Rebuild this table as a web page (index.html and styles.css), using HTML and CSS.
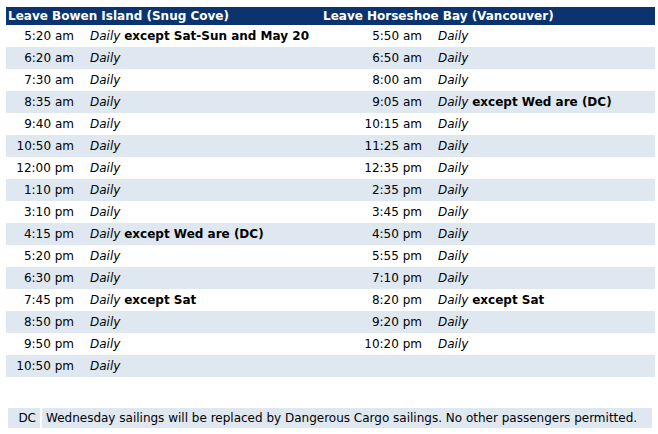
FILE: index.html
```html
<!DOCTYPE html>
<html>
<head>
<meta charset="utf-8">
<link rel="stylesheet" href="styles.css">
</head>
<body>
<table class="sched">
<colgroup><col class="c1"><col class="c2"><col class="c3"><col class="c4"></colgroup>
<thead>
<tr><th colspan="2">Leave Bowen Island (Snug Cove)</th><th colspan="2">Leave Horseshoe Bay (Vancouver)</th></tr>
</thead>
<tbody>
<tr><td class="t">5:20 am</td><td><i>Daily</i> <b>except Sat-Sun and May 20</b></td><td class="t">5:50 am</td><td><i>Daily</i></td></tr>
<tr><td class="t">6:20 am</td><td><i>Daily</i></td><td class="t">6:50 am</td><td><i>Daily</i></td></tr>
<tr><td class="t">7:30 am</td><td><i>Daily</i></td><td class="t">8:00 am</td><td><i>Daily</i></td></tr>
<tr><td class="t">8:35 am</td><td><i>Daily</i></td><td class="t">9:05 am</td><td><i>Daily</i> <b>except Wed are (DC)</b></td></tr>
<tr><td class="t">9:40 am</td><td><i>Daily</i></td><td class="t">10:15 am</td><td><i>Daily</i></td></tr>
<tr><td class="t">10:50 am</td><td><i>Daily</i></td><td class="t">11:25 am</td><td><i>Daily</i></td></tr>
<tr><td class="t">12:00 pm</td><td><i>Daily</i></td><td class="t">12:35 pm</td><td><i>Daily</i></td></tr>
<tr><td class="t">1:10 pm</td><td><i>Daily</i></td><td class="t">2:35 pm</td><td><i>Daily</i></td></tr>
<tr><td class="t">3:10 pm</td><td><i>Daily</i></td><td class="t">3:45 pm</td><td><i>Daily</i></td></tr>
<tr><td class="t">4:15 pm</td><td><i>Daily</i> <b>except Wed are (DC)</b></td><td class="t">4:50 pm</td><td><i>Daily</i></td></tr>
<tr><td class="t">5:20 pm</td><td><i>Daily</i></td><td class="t">5:55 pm</td><td><i>Daily</i></td></tr>
<tr><td class="t">6:30 pm</td><td><i>Daily</i></td><td class="t">7:10 pm</td><td><i>Daily</i></td></tr>
<tr><td class="t">7:45 pm</td><td><i>Daily</i> <b>except Sat</b></td><td class="t">8:20 pm</td><td><i>Daily</i> <b>except Sat</b></td></tr>
<tr><td class="t">8:50 pm</td><td><i>Daily</i></td><td class="t">9:20 pm</td><td><i>Daily</i></td></tr>
<tr><td class="t">9:50 pm</td><td><i>Daily</i></td><td class="t">10:20 pm</td><td><i>Daily</i></td></tr>
<tr><td class="t">10:50 pm</td><td><i>Daily</i></td><td class="t"></td><td></td></tr>
</tbody>
</table>
<table class="notes">
<tr><td class="code">DC</td><td>Wednesday sailings will be replaced by Dangerous Cargo sailings. No other passengers permitted.</td></tr>
</table>
</body>
</html>
```
FILE: styles.css
```css
body {
  margin: 0;
  padding: 7px 0 0 6px;
  font-family: "DejaVu Sans", Verdana, sans-serif;
  font-size: 12px;
  color: #000;
  background: #fff;
}
.sched {
  width: 649px;
  table-layout: fixed;
  border-collapse: collapse;
}
.c1 { width: 84px; }
.c2 { width: 231px; }
.c3 { width: 117px; }
.c4 { width: 217px; }
.sched th {
  background: #0b346e;
  color: #fff;
  text-align: left;
  font-weight: bold;
  height: 18px;
  padding: 0 0 0 2px;
  white-space: nowrap;
}
.sched td {
  height: 22px;
  padding: 0;
  white-space: nowrap;
}
.sched td.t {
  text-align: right;
  padding-right: 16px;
}
.sched tbody tr:nth-child(even) td {
  background: #dfe8f1;
}
.notes {
  margin-top: 29px;
  width: 648px;
  border-spacing: 2px;
}
.notes td {
  background: #dfe8f1;
  height: 20px;
  padding: 0 4px;
}
.notes td.code {
  width: 24px;
  text-align: right;
}
```
